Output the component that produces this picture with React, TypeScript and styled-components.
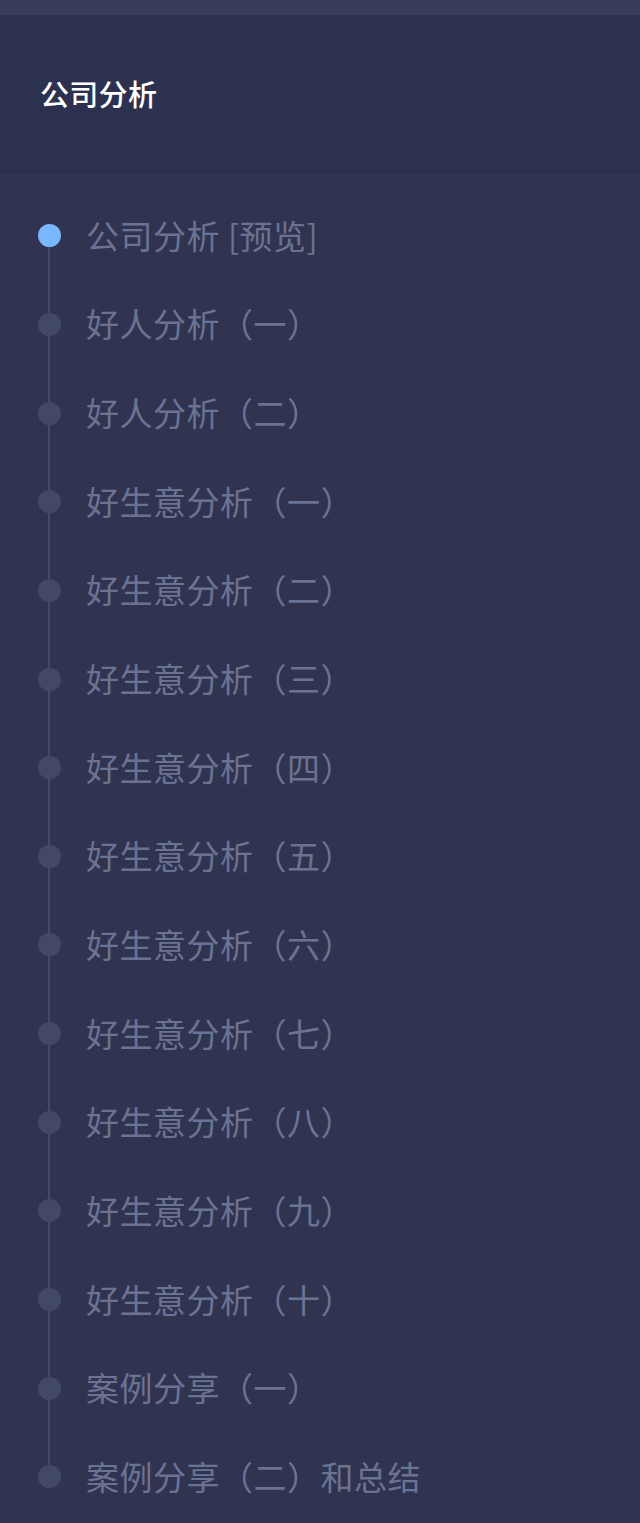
import React from "react";
import styled, { createGlobalStyle } from "styled-components";

const GlobalStyle = createGlobalStyle`
  html, body {
    margin: 0;
    padding: 0;
    background-color: #313450;
    font-family: "Noto Sans CJK SC", "Noto Sans", sans-serif;
  }
`;

const Page = styled.div`
  width: 640px;
  min-height: 1523px;
  background-color: #313450;
  display: flex;
  flex-direction: column;
`;

const TopStrip = styled.div`
  height: 15px;
  background-color: #383d5c;
`;

const Header = styled.div`
  height: 157px;
  background-color: #2d3150;
  border-bottom: 1px solid #2a2d4a;
  display: flex;
  align-items: center;
  padding-left: 40px;
`;

const Title = styled.h1`
  margin: 0;
  color: #ffffff;
  font-size: 29px;
  font-weight: 500;
  letter-spacing: 0.3px;
  line-height: 1;
`;

const List = styled.ul`
  list-style: none;
  margin: 0;
  padding: 19px 0 0 0;
`;

interface ItemProps {
  $last?: boolean;
}

const Item = styled.li<ItemProps>`
  position: relative;
  height: 88.65px;
  display: flex;
  align-items: center;
  padding-left: 86px;

  &::after {
    content: "";
    display: ${(p) => (p.$last ? "none" : "block")};
    position: absolute;
    left: 48px;
    top: 50%;
    width: 2px;
    height: 100%;
    background-color: #434a68;
  }
`;

interface DotProps {
  $active?: boolean;
}

const Dot = styled.span<DotProps>`
  position: absolute;
  left: 38px;
  top: 50%;
  width: 23px;
  height: 23px;
  margin-top: -12px;
  border-radius: 50%;
  z-index: 1;
  background-color: ${(p) => (p.$active ? "#7ab8fd" : "#424966")};
`;

const Label = styled.span`
  color: #6b7393;
  font-size: 33px;
  letter-spacing: 0.5px;
  line-height: 1;
  white-space: nowrap;
  margin-top: -2px;
`;

const chapters = [
  "公司分析 [预览]",
  "好人分析（一）",
  "好人分析（二）",
  "好生意分析（一）",
  "好生意分析（二）",
  "好生意分析（三）",
  "好生意分析（四）",
  "好生意分析（五）",
  "好生意分析（六）",
  "好生意分析（七）",
  "好生意分析（八）",
  "好生意分析（九）",
  "好生意分析（十）",
  "案例分享（一）",
  "案例分享（二）和总结",
];

export default function App() {
  return (
    <>
      <GlobalStyle />
      <Page>
        <TopStrip />
        <Header>
          <Title>公司分析</Title>
        </Header>
        <List>
          {chapters.map((c, i) => (
            <Item key={c} $last={i === chapters.length - 1}>
              <Dot $active={i === 0} />
              <Label>{c}</Label>
            </Item>
          ))}
        </List>
      </Page>
    </>
  );
}
